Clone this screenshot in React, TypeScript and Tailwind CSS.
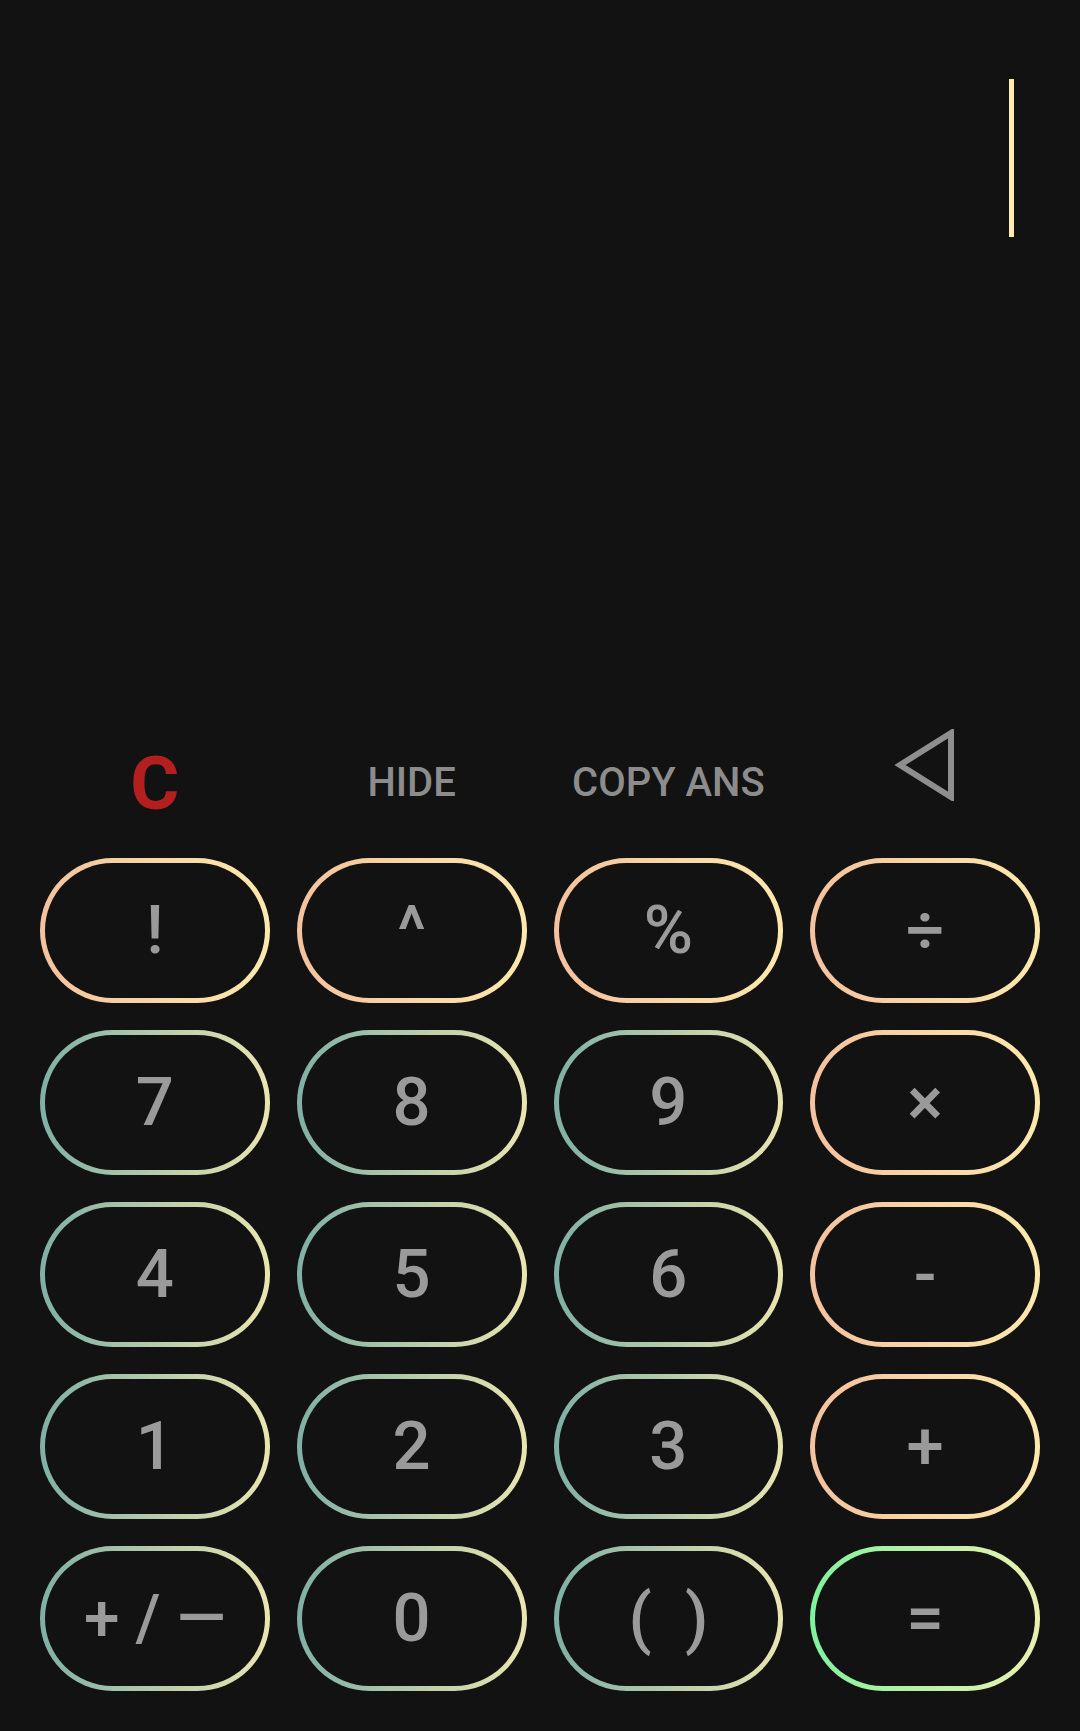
import React from "react"

type Key = { label: string; tone: "op" | "num" | "eq" }

const keys: Key[] = [
  { label: "!", tone: "op" },
  { label: "^", tone: "op" },
  { label: "%", tone: "op" },
  { label: "÷", tone: "op" },
  { label: "7", tone: "num" },
  { label: "8", tone: "num" },
  { label: "9", tone: "num" },
  { label: "×", tone: "op" },
  { label: "4", tone: "num" },
  { label: "5", tone: "num" },
  { label: "6", tone: "num" },
  { label: "-", tone: "op" },
  { label: "1", tone: "num" },
  { label: "2", tone: "num" },
  { label: "3", tone: "num" },
  { label: "+", tone: "op" },
  { label: "+ / —", tone: "num" },
  { label: "0", tone: "num" },
  { label: "(  )", tone: "num" },
  { label: "=", tone: "eq" },
]

const ring = {
  op: "bg-gradient-to-r from-[#f4c29e] to-[#fde9ad]",
  num: "bg-gradient-to-r from-[#7fb0a5] to-[#eae6b0]",
  eq: "bg-gradient-to-r from-[#7ef29e] to-[#eaf0b2]",
}

function CalcKey({ k }: { k: Key }) {
  const small = k.label === "+ / —"
  return (
    <button className={`h-[145px] rounded-full p-[5px] ${ring[k.tone]}`}>
      <span
        className={`flex h-full w-full items-center justify-center whitespace-pre rounded-full bg-[#121212] font-medium text-[#9a9a9a] ${small ? "text-[64px]" : "text-[67px]"}`}
      >
        {k.label}
      </span>
    </button>
  )
}

export default function App() {
  return (
    <div
      className="flex h-[1731px] w-[1080px] flex-col bg-[#121212]"
      style={{ fontFamily: "Roboto, 'Noto Sans', sans-serif" }}
    >
      {/* Display */}
      <div className="flex flex-1 justify-end pr-[66px] pt-[79px]">
        <div className="h-[158px] w-[5px] bg-[#fdeab0]" />
      </div>

      {/* Action row */}
      <div className="mb-[31px] grid h-[100px] grid-cols-4 gap-[27px] px-10">
        <div className="flex items-center justify-center text-[75px] font-bold text-[#b31f1f]">C</div>
        <div className="flex items-center justify-center text-[40px] font-medium text-[#8c8c8c]">HIDE</div>
        <div className="flex items-center justify-center text-[40px] font-medium text-[#8c8c8c]">COPY ANS</div>
        <div className="flex items-center justify-center">
          <svg width="62" height="72" viewBox="0 0 62 72" className="-mt-[36px]">
            <path d="M57 4 L6 36 L57 68 Z" fill="none" stroke="#8e8e8e" strokeWidth="6" strokeLinejoin="miter" />
          </svg>
        </div>
      </div>

      {/* Keypad */}
      <div className="grid grid-cols-4 gap-x-[27px] gap-y-[27px] px-10 pb-10">
        {keys.map((k) => (
          <CalcKey key={k.label} k={k} />
        ))}
      </div>
    </div>
  )
}
